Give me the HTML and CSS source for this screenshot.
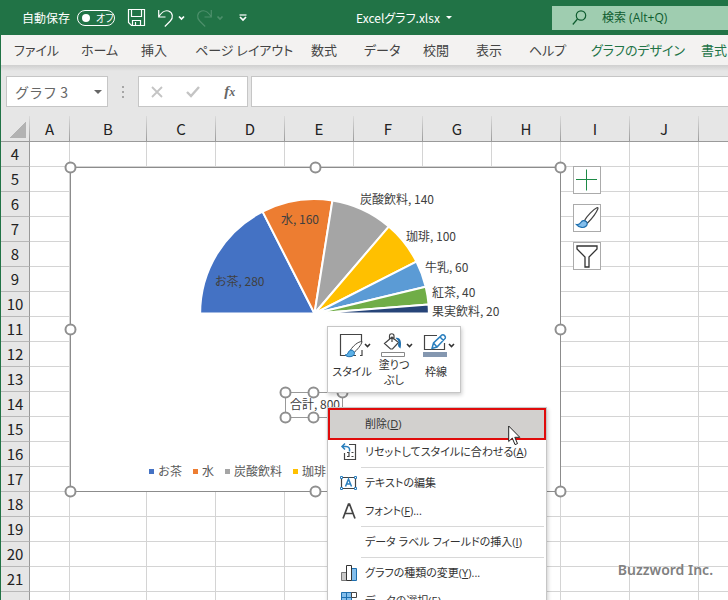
FILE: index.html
```html
<!DOCTYPE html>
<html lang="ja">
<head>
<meta charset="utf-8">
<title>Excelグラフ.xlsx</title>
<link rel="stylesheet" href="styles.css">
</head>
<body>
<header class="titlebar">
  <div class="quick">
    <label class="autosave"><span>自動保存</span><input type="checkbox" class="switch-input"><span class="switch"><i></i>オフ</span></label>
    <button class="tool save" aria-label="上書き保存"><svg width="17" height="17" viewBox="0 0 17 17"><path d="M.5 .5h16v16H3.5l-3-3zM3.500 .5v7h10v-7M4.500 16.500v-5h8v5M7.500 16v-3"/></svg></button>
    <button class="tool undo" aria-label="元に戻す"><svg width="28" height="18" viewBox="0 0 28 18"><path d="M.7 1v7H7.500M.9 7.500C3.500 3.500 7 1 10.500 2c4.500 1.400 5 6.800 1.800 10l-5.500 5.500"/><path class="bold" d="M21 7.500l2.500 2.500L26 7.500"/></svg></button>
    <button class="tool redo" aria-label="やり直し" disabled><svg width="28" height="18" viewBox="0 0 28 18"><path d="M14.300 1v7H7.500M14.100 7.500C11.500 3.500 8 1 4.500 2c-4.500 1.400-5 6.800-1.800 10l5.500 5.500"/><path class="bold" d="M20.500 7.500l2.500 2.500L25.500 7.500"/></svg></button>
    <button class="tool more" aria-label="カスタマイズ"><svg width="8" height="7" viewBox="0 0 8 7"><path d="M.5 1h7"/><path class="bold" d="M1 3l3 3 3-3"/></svg></button>
  </div>
  <button class="filename">Excelグラフ.xlsx<i class="caret"></i></button>
  <label class="search"><svg width="15" height="16" viewBox="0 0 15 16"><circle cx="9" cy="5.500" r="4.700"/><path d="M5.500 9L.8 14.500"/></svg><input type="text" placeholder="検索 (Alt+Q)"></label>
</header>
<nav class="tabs">
  <a href="#">ファイル</a><a href="#">ホーム</a><a href="#">挿入</a><a href="#">ページ レイアウト</a><a href="#">数式</a><a href="#">データ</a><a href="#">校閲</a><a href="#">表示</a><a href="#">ヘルプ</a><a href="#" class="context">グラフのデザイン</a><a href="#" class="context">書式</a>
</nav>
<section class="formula-bar">
  <button class="namebox">グラフ 3<i class="caret"></i></button>
  <span class="grip"><i></i><i></i><i></i></span>
  <div class="formula-tools">
    <button aria-label="キャンセル" disabled><svg width="12" height="12" viewBox="0 0 12 12"><path d="M1 1l10 10M11 1L1 11"/></svg></button>
    <button aria-label="入力" disabled><svg width="14" height="12" viewBox="0 0 14 12"><path class="check" d="M1 6l4 4 8-9"/></svg></button>
    <button class="fx" aria-label="関数の挿入">f<small>x</small></button>
  </div>
  <input class="formula" type="text" aria-label="数式バー">
</section>
<main class="sheet">
  <table class="grid">
    <colgroup><col class="c-head"><col class="c-a"><col class="c-b"><col span="9" class="c-std"></colgroup>
    <thead><tr><th class="corner"></th><th>A</th><th>B</th><th>C</th><th>D</th><th>E</th><th>F</th><th>G</th><th>H</th><th>I</th><th>J</th><th></th></tr></thead>
    <tbody>
      <tr><th>4</th><td></td><td></td><td></td><td></td><td></td><td></td><td></td><td></td><td></td><td></td><td></td></tr>
      <tr><th>5</th><td></td><td></td><td></td><td></td><td></td><td></td><td></td><td></td><td></td><td></td><td></td></tr>
      <tr><th>6</th><td></td><td></td><td></td><td></td><td></td><td></td><td></td><td></td><td></td><td></td><td></td></tr>
      <tr><th>7</th><td></td><td></td><td></td><td></td><td></td><td></td><td></td><td></td><td></td><td></td><td></td></tr>
      <tr><th>8</th><td></td><td></td><td></td><td></td><td></td><td></td><td></td><td></td><td></td><td></td><td></td></tr>
      <tr><th>9</th><td></td><td></td><td></td><td></td><td></td><td></td><td></td><td></td><td></td><td></td><td></td></tr>
      <tr><th>10</th><td></td><td></td><td></td><td></td><td></td><td></td><td></td><td></td><td></td><td></td><td></td></tr>
      <tr><th>11</th><td></td><td></td><td></td><td></td><td></td><td></td><td></td><td></td><td></td><td></td><td></td></tr>
      <tr><th>12</th><td></td><td></td><td></td><td></td><td></td><td></td><td></td><td></td><td></td><td></td><td></td></tr>
      <tr><th>13</th><td></td><td></td><td></td><td></td><td></td><td></td><td></td><td></td><td></td><td></td><td></td></tr>
      <tr><th>14</th><td></td><td></td><td></td><td></td><td></td><td></td><td></td><td></td><td></td><td></td><td></td></tr>
      <tr><th>15</th><td></td><td></td><td></td><td></td><td></td><td></td><td></td><td></td><td></td><td></td><td></td></tr>
      <tr><th>16</th><td></td><td></td><td></td><td></td><td></td><td></td><td></td><td></td><td></td><td></td><td></td></tr>
      <tr><th>17</th><td></td><td></td><td></td><td></td><td></td><td></td><td></td><td></td><td></td><td></td><td></td></tr>
      <tr><th>18</th><td></td><td></td><td></td><td></td><td></td><td></td><td></td><td></td><td></td><td></td><td></td></tr>
      <tr><th>19</th><td></td><td></td><td></td><td></td><td></td><td></td><td></td><td></td><td></td><td></td><td></td></tr>
      <tr><th>20</th><td></td><td></td><td></td><td></td><td></td><td></td><td></td><td></td><td></td><td></td><td></td></tr>
      <tr><th>21</th><td></td><td></td><td></td><td></td><td></td><td></td><td></td><td></td><td></td><td></td><td></td></tr>
      <tr><th></th><td></td><td></td><td></td><td></td><td></td><td></td><td></td><td></td><td></td><td></td><td></td></tr>
    </tbody>
  </table>

  <figure class="chart">
    <svg class="plot" width="491" height="325" viewBox="0 0 491 325">
      <rect class="frame" x=".5" y=".5" width="490" height="324"/>
      <g class="slices" transform="translate(244.500 146.500) scale(1.012)">
        <path fill="#4472c4" d="M0 0L-113 0A113 113 0 0 1 -51.300 -100.700Z"/>
        <path fill="#ed7d31" d="M0 0L-51.300 -100.700A113 113 0 0 1 17.700 -111.600Z"/>
        <path fill="#a5a5a5" d="M0 0L17.700 -111.600A113 113 0 0 1 73.400 -85.900Z"/>
        <path fill="#ffc000" d="M0 0L73.400 -85.900A113 113 0 0 1 100.700 -51.300Z"/>
        <path fill="#5b9bd5" d="M0 0L100.700 -51.300A113 113 0 0 1 109.900 -26.400Z"/>
        <path fill="#70ad47" d="M0 0L109.900 -26.400A113 113 0 0 1 112.700 -8.900Z"/>
        <path fill="#264478" d="M0 0L112.700 -8.900A113 113 0 0 1 113 0Z"/>
      </g>
      <g class="labels">
        <text x="145" y="119">お茶, 280</text>
        <text x="211" y="57">水, 160</text>
        <text x="290" y="37">炭酸飲料, 140</text>
        <text x="336" y="74">珈琲, 100</text>
        <text x="355" y="105">牛乳, 60</text>
        <text x="362" y="130">紅茶, 40</text>
        <text x="362" y="149">果実飲料, 20</text>
        <text x="220" y="242">合計, 800</text>
      </g>
      <rect class="selection" x="215.500" y="225.500" width="57" height="25"/>
      <g class="handles">
        <circle cx=".5" cy=".5" r="5"/><circle cx="245.500" cy=".5" r="5"/><circle cx="490.500" cy=".5" r="5"/>
        <circle cx=".5" cy="162.500" r="5"/><circle cx="490.500" cy="162.500" r="5"/>
        <circle cx=".5" cy="324.500" r="5"/><circle cx="245.500" cy="324.500" r="5"/><circle cx="490.500" cy="324.500" r="5"/>
        <circle cx="215.500" cy="225.500" r="5"/><circle cx="243.500" cy="225.500" r="5"/><circle cx="272.500" cy="225.500" r="5"/>
        <circle cx="215.500" cy="250.500" r="5"/><circle cx="243.500" cy="250.500" r="5"/><circle cx="272.500" cy="250.500" r="5"/>
      </g>
    </svg>
    <ul class="legend"><li class="s1">お茶</li><li class="s2">水</li><li class="s3">炭酸飲料</li><li class="s4">珈琲</li></ul>
  </figure>

  <div class="chart-buttons">
    <button aria-label="グラフ要素"><svg width="22" height="22" viewBox="0 0 22 22"><path stroke="#1d8a46" d="M10.500 .5v21M0 10.500h21"/></svg></button>
    <button aria-label="グラフ スタイル"><svg width="24" height="24" viewBox="0 0 24 24"><path fill="#fff" stroke="#444" stroke-width="1.200" d="M9.500 14.500C12 10 18 3.500 22.300 1.500c.8 0 .8.8.5 1.500C21 7.500 16 13.500 12.500 17z"/><path fill="#83beec" stroke="#1e6fae" stroke-width="1.200" d="M1.500 18.500c2 .3 3.500-.6 4.500-2.200 1.300-2 3.300-2.200 5-.9 1.500 1.300 1.600 3.200.2 4.600-2.400 2.300-6.700 2.100-9.700-1.500z"/></svg></button>
    <button aria-label="グラフ フィルター"><svg width="22" height="23" viewBox="0 0 22 23"><path fill="#fff" stroke="#333" stroke-width="1.300" d="M1 1h20v3l-8 8v10H9V12L1 4z"/></svg></button>
  </div>

  <div class="mini-toolbar">
    <button><svg width="34" height="24" viewBox="0 0 34 24"><path class="ink" d="M18 22.500H2.500V1.500h21v8M24 17v5.500h-2"/><path fill="#fff" stroke="#444" d="M12.500 17C15 13 20 8.500 24 8.500 23.500 12 19 17 15.500 20z"/><path fill="#5bb0e6" stroke="#1e6fae" d="M7 22c2 0 2.800-1.500 3.500-3 1-2.200 3.500-2.500 5-1s1.200 3.800-.5 4.800c-2.500 1.500-6 1.200-8-.8z"/><path class="arrow" d="M27 11l2.500 2.500 2.500-2.500"/></svg><span>スタイル</span></button>
    <button><svg width="34" height="24" viewBox="0 0 34 24"><path class="ink" fill="#fff" d="M4.500 10.500L12 4l6.500 5.500-6 6.500h-2zM9.500 6.500V3c0-3 4.500-3 4.500 0v4M12 4v5"/><path fill="#1e6fae" d="M15.500 5c5-1 6.500 4 5 10.500-2.500-1.500-3-3-2-5.500.3-2-1-3.500-3-5z"/><path fill="#fff" stroke="#888" d="M1.500 19.500h23v4h-23z"/><path class="arrow" d="M27 11l2.500 2.500 2.500-2.500"/></svg><span>塗りつ<br>ぶし</span></button>
    <button><svg width="34" height="24" viewBox="0 0 34 24"><path class="ink" d="M15 2.500H2.500v14h20V10"/><path fill="#fff" stroke="#2a7fbe" stroke-width="1.500" d="M10 15.500l1.500-5.500L20 2c1.800-.8 4 1.400 3.300 3.200L15 14zM11.500 10l3.500 4M18 4l3.500 3.500"/><path fill="#8497b0" d="M1 19h24v5H1z"/><path class="arrow" d="M27 11l2.500 2.500 2.500-2.500"/></svg><span>枠線</span></button>
  </div>

  <div class="menu">
    <button class="active"><span class="icon"></span><span>削除(<u>D</u>)</span></button>
    <button><span class="icon"><svg width="16" height="18" viewBox="0 0 16 18"><path class="ink" d="M8 1.500h6.500v15h-11V10"/><path fill="none" stroke="#2a7fbe" stroke-width="1.500" d="M4 .5L1 3.500l3 3M1 3.500h4c3 0 4 2 3.500 5"/><path class="ink" d="M6 9.500h2v4H6M10.500 9.500h2M10.500 13.500h2"/></svg></span><span>リセットしてスタイルに合わせる(<u>A</u>)</span></button>
    <hr>
    <button><span class="icon"><svg width="17" height="14" viewBox="0 0 17 14"><path class="ink" d="M1.500 1.500h14v11h-14z"/><path fill="#fff" stroke="#2a7fbe" d="M.5 .5h2v2h-2zM14.500 .5h2v2h-2zM.5 11.500h2v2h-2zM14.500 11.500h2v2h-2z"/><path fill="none" stroke="#2a7fbe" stroke-width="1.500" d="M5.500 10.500l3-7.500 3 7.500M6.500 8h4"/></svg></span><span>テキストの編集</span></button>
    <button><span class="icon"><svg width="14" height="16" viewBox="0 0 14 16"><path fill="none" stroke="#444" stroke-width="1.700" d="M1 15.500L6.500 1h1L13 15.500M3 10.500h8"/></svg></span><span>フォント(<u>F</u>)...</span></button>
    <hr>
    <button><span class="icon"></span><span>データ ラベル フィールドの挿入(<u>I</u>)</span></button>
    <hr>
    <button><span class="icon"><svg width="16" height="17" viewBox="0 0 16 17"><path fill="#c8c8c8" stroke="#777" d="M.5 7.500h5v8h-5z"/><path fill="#83beec" stroke="#1e6fae" d="M10.500 3.500h5v12h-5z"/><path fill="#fff" stroke="#333" d="M5.500 .5h5v15h-5z"/></svg></span><span>グラフの種類の変更(<u>Y</u>)...</span></button>
    <button><span class="icon"><svg width="16" height="18" viewBox="0 0 16 18"><path fill="#83beec" stroke="#1e6fae" d="M.5 .5h10v15H.5zM5.500 .5v15M.5 5.500h10M.5 10.500h10"/><path fill="#fff" stroke="#444" d="M10.500 .5h5v5h-5z"/></svg></span><span>データの選択(<u>E</u>)...</span></button>
  </div>
  <svg class="pointer" width="14" height="21" viewBox="0 0 14 21"><path fill="#fff" stroke="#222" d="M.7 1v15.500l3.600-3.400 2.700 6.500 2.500-1-2.700-6.300h5z"/></svg>
  <p class="credit">Buzzword Inc.</p>
</main>
</body>
</html>
```

FILE: styles.css
```css
* { box-sizing: border-box; }
html, body { height: 100%; }
body {
  margin: 0;
  display: flex;
  flex-direction: column;
  overflow: hidden;
  border-left: 1px solid #217346;
  background: #e6e6e6;
  color: #333;
  font: 12px/16px "Noto Sans CJK JP", sans-serif;
  font-feature-settings: "palt";
}
button, input {
  margin: 0;
  padding: 0;
  border: 0;
  background: none;
  color: inherit;
  font: inherit;
  font-feature-settings: inherit;
}
svg { display: block; overflow: visible; flex: none; }
.caret {
  border: 4px solid transparent;
  border-top-color: currentColor;
  border-bottom: 0;
}

/* Title bar */
.titlebar {
  flex: none;
  height: 35px;
  display: flex;
  align-items: center;
  background: #217346;
  color: #fff;
}
.titlebar svg { fill: none; stroke: currentColor; stroke-width: 1.2; }
.titlebar .bold { stroke-width: 1.7; }
.quick { display: flex; align-items: center; width: 355px; padding-left: 21px; }
.autosave { display: flex; align-items: center; gap: 7px; }
.switch-input { position: absolute; opacity: 0; }
.switch {
  display: flex;
  align-items: center;
  gap: 6px;
  width: 38px;
  height: 16px;
  padding-left: 4px;
  border: 1px solid #fff;
  border-radius: 8px;
  font-size: 10px;
  line-height: 14px;
}
.switch i { width: 8px; height: 8px; border-radius: 50%; background: #fff; }
.save { margin-left: 13px; }
.undo { margin-left: 13px; }
.redo { margin-left: 11px; color: #4d8f6b; }
.more { margin-left: 14px; }
.filename { display: flex; align-items: center; gap: 6px; white-space: nowrap; }
.filename .caret { border-width: 3px 3px 0; }
.search {
  flex: none;
  display: flex;
  align-items: center;
  gap: 15px;
  width: 176px;
  height: 24px;
  margin-left: auto;
  padding-left: 20px;
  background: #9fcdb0;
  color: #0e5c2f;
  font-family: "Open Sans", "Noto Sans CJK JP", sans-serif;
}
.search input { width: 130px; outline: 0; }
.search input::placeholder { color: #0e5c2f; opacity: 1; }

/* Ribbon tabs */
.tabs {
  flex: none;
  display: grid;
  grid-template-columns: 67px 60px 54px 116px 53px 59px 53px 53px 62px 110px 1fr;
  align-items: center;
  height: 30px;
  padding-left: 13px;
  background: #f3f2f1;
  font-size: 13px;
  white-space: nowrap;
}
.tabs a { color: #444; text-decoration: none; }
.tabs .context { color: #217346; }

/* Formula bar */
.formula-bar {
  flex: none;
  display: flex;
  height: 51px;
  padding: 11px 0 9px 5px;
  background: linear-gradient(#cfcfcf, #e6e6e6 6px);
}
.namebox, .formula-tools, .formula { border: 1px solid #c6c6c6; background: #fff; }
.namebox {
  display: flex;
  align-items: center;
  justify-content: space-between;
  width: 102px;
  padding: 0 5px 0 8px;
  color: #666;
  font-size: 14px;
  font-feature-settings: normal;
}
.grip { display: flex; flex-direction: column; justify-content: center; gap: 3px; width: 30px; align-items: center; }
.grip i { width: 2px; height: 2px; background: #a6a6a6; }
.formula-tools { display: flex; align-items: center; justify-content: space-around; width: 110px; }
.formula-tools button { color: #666; }
.formula-tools path { fill: none; stroke: #c4c4c4; stroke-width: 1.8; }
.formula-tools .check { stroke-width: 2.4; }
.fx { font: italic bold 15px/16px "Liberation Serif", serif; }
.fx small { font-size: 12px; }
.formula { flex: 1; min-width: 0; margin-left: 3px; border-right: 0; }

/* Worksheet */
.sheet { flex: 1; min-height: 0; position: relative; overflow: hidden; background: #fff; }
.grid { width: 767px; table-layout: fixed; border-collapse: separate; border-spacing: 0; }
.c-head { width: 29px; }
.c-a { width: 40px; }
.c-b { width: 77px; }
.c-std { width: 69px; }
.grid th, .grid td { height: 25px; padding: 0; border: solid #d4d4d4; border-width: 0 1px 1px 0; }
.grid th { background: #e6e6e6; color: #222; font-size: 15px; font-weight: 400; line-height: 20px; text-align: center; }
.grid thead th {
  height: 26px;
  border-bottom-color: #999;
  border-image: linear-gradient(#ddd, #999) 1;
}
.grid tbody th { border-right-color: #999; border-bottom-color: #b8b8b8; }
.grid .corner { background: linear-gradient(135deg, transparent 50%, #b2b2b2 50%) 8px 5px / 17px 17px no-repeat #e6e6e6; }

/* Chart object */
.chart { position: absolute; left: 69px; top: 51px; margin: 0; }
.frame { fill: #fff; stroke: #8c8c8c; }
.slices path { stroke: #fff; stroke-width: 2; stroke-linejoin: round; }
.labels { fill: #404040; font-size: 12px; }
.selection { fill: none; stroke: #999; }
.handles circle { fill: #fff; stroke: #8f8f8f; stroke-width: 2; }
.legend {
  position: absolute;
  left: 79px;
  bottom: 13px;
  display: flex;
  gap: 11px;
  margin: 0;
  padding: 0;
  list-style: none;
  color: #595959;
  font-feature-settings: normal;
  white-space: nowrap;
}
.legend li { display: flex; align-items: center; gap: 4px; }
.legend li::before { content: ""; width: 5px; height: 5px; background: var(--series); }
.s1 { --series: #4472c4; }
.s2 { --series: #ed7d31; }
.s3 { --series: #a5a5a5; }
.s4 { --series: #ffc000; }

.chart-buttons { position: absolute; left: 572px; top: 50px; display: grid; gap: 10px; }
.chart-buttons button {
  display: grid;
  place-items: center;
  width: 28px;
  height: 28px;
  border: 1px solid #ababab;
  background: #fff;
}

/* Floating toolbar and context menu */
.ink { fill: none; stroke: #444; stroke-width: 1.2; }
.mini-toolbar, .menu {
  position: absolute;
  left: 326px;
  border: 1px solid #c6c6c6;
  background: #fff;
  box-shadow: 1px 2px 4px rgba(0, 0, 0, .2);
  font-family: "Open Sans", "Noto Sans CJK JP", sans-serif;
  font-size: 11px;
}
.mini-toolbar {
  top: 210px;
  display: grid;
  grid-template-columns: repeat(3, 42px);
  width: 134px;
  height: 67px;
  padding: 6px 3px;
  align-items: start;
}
.mini-toolbar button { display: flex; flex-direction: column; align-items: center; line-height: 15px; white-space: nowrap; }
.mini-toolbar svg { margin-left: 6px; }
.mini-toolbar span { min-height: 28px; display: grid; place-items: center; }
.arrow { fill: none; stroke: #333; stroke-width: 1.6; }
.menu { top: 291px; width: 220px; padding: 2px; }
.menu button {
  display: grid;
  grid-template-columns: 35px 1fr;
  align-items: center;
  width: 100%;
  height: 28px;
  text-align: left;
  white-space: nowrap;
}
.menu .icon { display: grid; place-items: center; width: 37px; }
.menu .active { background: #d2d0ce; outline: 2px solid #e00b0b; }
.menu hr { height: 1px; margin: 1px 0 1px 31px; border: 0; background: #d8d8d8; }
.pointer { position: absolute; left: 507px; top: 309px; }
.credit {
  position: absolute;
  right: 15px;
  bottom: 20px;
  margin: 0;
  color: #808080;
  font: 600 14px/20px "Noto Sans", sans-serif;
}
```
